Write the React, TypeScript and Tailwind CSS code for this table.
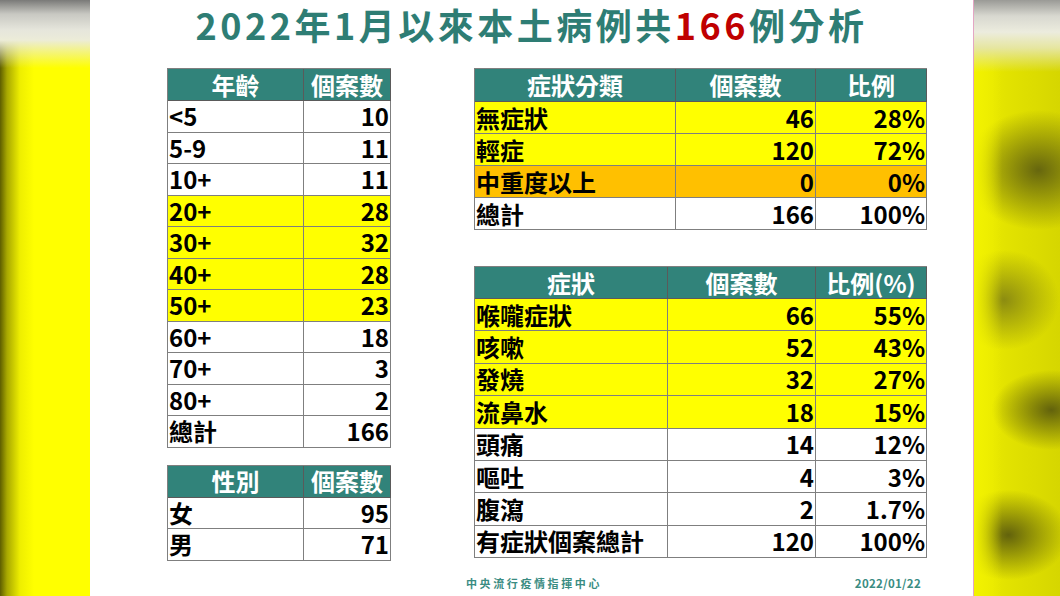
import React from "react";

type Row = { cells: string[]; bg: string };

const Y = "bg-[#ffff00]";
const W = "bg-white";
const O = "bg-[#ffc000]";

function Table({
  widths,
  header,
  rows,
  headH,
  rowH,
}: {
  widths: string[];
  header: string[];
  rows: Row[];
  headH: string;
  rowH: string;
}) {
  return (
    <div className="flex flex-col border-l border-t border-[#7f7f7f] w-fit">
      <div className={`flex bg-[#31837a] ${headH}`}>
        {header.map((h, i) => (
          <div
            key={i}
            className={`${widths[i]} flex items-center justify-center border-r border-b border-[#5a5a5a] text-white text-[24px] font-bold leading-[26px]`}
          >
            {h}
          </div>
        ))}
      </div>
      {rows.map((r, ri) => (
        <div key={ri} className={`flex ${r.bg} ${rowH}`}>
          {r.cells.map((c, i) => (
            <div
              key={i}
              className={`${widths[i]} flex items-center ${
                i === 0 ? "justify-start pl-[1px]" : "justify-end pr-[1px]"
              } border-r border-b border-[#7f7f7f] text-black text-[24px] font-bold leading-[26px]`}
            >
              {c}
            </div>
          ))}
        </div>
      ))}
    </div>
  );
}

export default function App() {
  const age: Row[] = [
    { cells: ["<5", "10"], bg: W },
    { cells: ["5-9", "11"], bg: W },
    { cells: ["10+", "11"], bg: W },
    { cells: ["20+", "28"], bg: Y },
    { cells: ["30+", "32"], bg: Y },
    { cells: ["40+", "28"], bg: Y },
    { cells: ["50+", "23"], bg: Y },
    { cells: ["60+", "18"], bg: W },
    { cells: ["70+", "3"], bg: W },
    { cells: ["80+", "2"], bg: W },
    { cells: ["總計", "166"], bg: W },
  ];
  const gender: Row[] = [
    { cells: ["女", "95"], bg: W },
    { cells: ["男", "71"], bg: W },
  ];
  const cls: Row[] = [
    { cells: ["無症狀", "46", "28%"], bg: Y },
    { cells: ["輕症", "120", "72%"], bg: Y },
    { cells: ["中重度以上", "0", "0%"], bg: O },
    { cells: ["總計", "166", "100%"], bg: W },
  ];
  const sym: Row[] = [
    { cells: ["喉嚨症狀", "66", "55%"], bg: Y },
    { cells: ["咳嗽", "52", "43%"], bg: Y },
    { cells: ["發燒", "32", "27%"], bg: Y },
    { cells: ["流鼻水", "18", "15%"], bg: Y },
    { cells: ["頭痛", "14", "12%"], bg: W },
    { cells: ["嘔吐", "4", "3%"], bg: W },
    { cells: ["腹瀉", "2", "1.7%"], bg: W },
    { cells: ["有症狀個案總計", "120", "100%"], bg: W },
  ];

  return (
    <div
      className="flex w-[1060px] h-[596px] overflow-hidden"
      style={{ fontFamily: '"Noto Sans CJK TC", "Noto Sans", sans-serif' }}
    >
      <div className="w-[90px] h-full shrink-0 bg-[linear-gradient(to_bottom,#7a7a78_0px,#c8c8c2_14px,#e6e6dc_30px,#ececd8_40px,rgba(255,255,0,0)_68px),linear-gradient(to_right,#5e5e00_0px,#a8a800_7px,#eeee00_20px,#ffff00_34px)]" />
      <div className="w-[884px] h-full shrink-0 bg-white border-r border-[#e4a6c4] flex flex-col">
        <div className="h-[68px] flex justify-center pt-[1px]">
          <div className="text-[36px] leading-[46px] font-bold tracking-[3.5px] text-[#2e7d74]">
            2022年1月以來本土病例共<span className="text-[#c00000]">166</span>例分析
          </div>
        </div>
        <div className="flex">
          <div className="ml-[77px] flex flex-col gap-[17px]">
            <Table
              widths={["w-[136px]", "w-[87px]"]}
              header={["年齡", "個案數"]}
              rows={age}
              headH="h-[32px]"
              rowH="h-[31.5px]"
            />
            <Table
              widths={["w-[136px]", "w-[87px]"]}
              header={["性別", "個案數"]}
              rows={gender}
              headH="h-[32px]"
              rowH="h-[31.5px]"
            />
          </div>
          <div className="ml-[83px] flex flex-col gap-[36px]">
            <Table
              widths={["w-[201px]", "w-[140px]", "w-[111px]"]}
              header={["症狀分類", "個案數", "比例"]}
              rows={cls}
              headH="h-[33px]"
              rowH="h-[32px]"
            />
            <Table
              widths={["w-[193px]", "w-[148px]", "w-[111px]"]}
              header={["症狀", "個案數", "比例(%)"]}
              rows={sym}
              headH="h-[32px]"
              rowH="h-[32.4px]"
            />
          </div>
        </div>
        <div className="ml-[376px] mt-[15px] w-[455px] flex justify-between items-center text-[#3a8c82] font-bold leading-[14px]">
          <span className="text-[11px] tracking-[2.6px]">中央流行疫情指揮中心</span>
          <span className="text-[11.5px] tracking-[0.3px]">2022/01/22</span>
        </div>
      </div>
      <div className="flex-1 h-full bg-[linear-gradient(to_bottom,#9a9a96_0px,#d8d8d0_16px,#ececde_32px,#e6e6a0_48px,rgba(230,230,0,0)_72px),linear-gradient(to_right,#f2f200_0px,rgba(242,242,0,0.6)_12px,rgba(242,242,0,0)_28px),radial-gradient(ellipse_75px_60px_at_75%_170px,#66660e_0%,rgba(102,102,14,0.5)_50%,rgba(102,102,14,0)_100%),radial-gradient(ellipse_55px_50px_at_35%_300px,#8c8c10_0%,rgba(140,140,16,0)_100%),radial-gradient(ellipse_60px_40px_at_90%_410px,#62620c_0%,rgba(98,98,12,0)_100%),radial-gradient(ellipse_60px_45px_at_40%_535px,#62620c_0%,rgba(98,98,12,0)_100%),linear-gradient(to_right,#eeee00_0px,#e2e200_40%,#d6d600_100%)]" />
    </div>
  );
}
